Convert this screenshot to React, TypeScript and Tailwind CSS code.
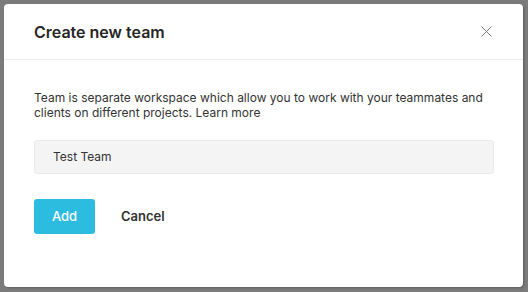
import React from "react";

export default function App() {
  return (
    <div className="w-[528px] h-[292px] bg-[#7b7b7b] p-[4px] pr-[5px] pb-[5px]" style={{ fontFamily: "Inter, 'Noto Sans', sans-serif" }}>
      <div className="w-[519px] h-[283px] bg-white rounded-[4px] flex flex-col shadow-[1px_1px_2px_rgba(0,0,0,0.25)]">
        <div className="h-[56px] flex items-center justify-between pl-[30px] pr-[31px] border-b border-[#ececec] shrink-0">
          <h1 className="text-[16px] font-semibold text-[#262626] leading-none">Create new team</h1>
          <button className="w-[11px] h-[11px] flex items-center justify-center">
            <svg width="11" height="11" viewBox="0 0 11 11" fill="none" stroke="#7a7a7a" strokeWidth="1">
              <path d="M0.5 0.5 L10.5 10.5 M10.5 0.5 L0.5 10.5" />
            </svg>
          </button>
        </div>
        <div className="px-[30px] pt-[30px]">
          <p className="text-[12px] leading-[15px] text-[#333]">
            Team is separate workspace which allow you to work with your teammates and clients on different projects. Learn more
          </p>
          <div className="mt-[20px] h-[34px] w-[460px] bg-[#f4f4f4] border border-[#ebebeb] rounded-[3px] flex items-center pl-[18px] text-[12px] text-[#333]">
            Test Team
          </div>
          <div className="mt-[25px] flex items-center gap-[26px]">
            <button className="w-[61px] h-[35px] bg-[#2bbcdf] rounded-[3px] text-white text-[13px] font-medium">Add</button>
            <button className="text-[13px] font-semibold text-[#333]">Cancel</button>
          </div>
        </div>
      </div>
    </div>
  );
}
